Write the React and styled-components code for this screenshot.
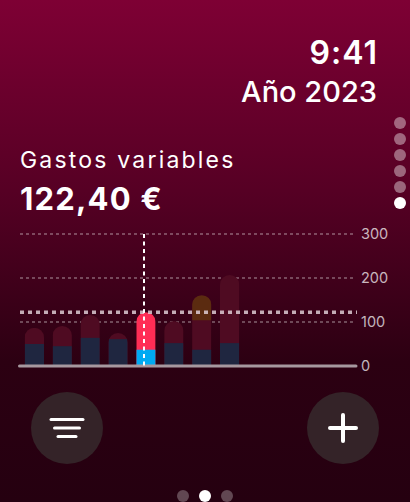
import { createGlobalStyle, styled } from "styled-components";

const GlobalStyle = createGlobalStyle`
  html, body {
    margin: 0;
    padding: 0;
    background: #250010;
  }
  body {
    font-family: Inter, "Noto Sans", "Liberation Sans", sans-serif;
    color: #fff;
  }
`;

const Screen = styled.div`
  position: relative;
  width: 410px;
  height: 502px;
  overflow: hidden;
  display: flex;
  flex-direction: column;
  background: linear-gradient(180deg, #7e0034 0%, #560024 38%, #2c0012 72%, #250010 100%);
`;

const Header = styled.div`
  display: flex;
  flex-direction: column;
  align-items: flex-end;
  padding: 34px 33px 0 0;
`;

const Time = styled.div`
  font-size: 32px;
  line-height: 38px;
  font-weight: 600;
  letter-spacing: 1px;
  margin-right: -1px;
`;

const Year = styled.div`
  margin-top: 3px;
  font-size: 29px;
  line-height: 34px;
  font-weight: 500;
`;

const Summary = styled.div`
  padding: 37px 0 0 20px;
`;

const Label = styled.div`
  font-size: 23px;
  line-height: 28px;
  font-weight: 400;
  letter-spacing: 2.2px;
`;

const Amount = styled.div`
  margin-top: 6px;
  font-size: 31px;
  line-height: 38px;
  font-weight: 700;
  letter-spacing: 1.2px;
`;

const ChartSvg = styled.svg`
  display: block;
  margin-top: 8px;
`;

const ActionRow = styled.div`
  display: flex;
  justify-content: space-between;
  padding: 16px 31px 0;
`;

const RoundButton = styled.button`
  width: 72px;
  height: 72px;
  border-radius: 50%;
  border: none;
  padding: 0;
  background: #342328;
  display: flex;
  align-items: center;
  justify-content: center;
`;

const PageDots = styled.div`
  display: flex;
  justify-content: center;
  gap: 10px;
  margin-top: 26px;
`;

const SideDots = styled.div`
  position: absolute;
  right: 4px;
  top: 117px;
  display: flex;
  flex-direction: column;
  gap: 4px;
`;

const Dot = styled.span`
  width: 12px;
  height: 12px;
  border-radius: 50%;
  background: ${(p) => (p.$active ? "#ffffff" : p.$soft ? "rgba(255,255,255,0.4)" : "rgba(255,255,255,0.28)")};
`;

// values per month: top value, lower (navy) part, optional highlight part
const months = [
  { total: 87, low: 50 },
  { total: 91, low: 45 },
  { total: 116, low: 64 },
  { total: 75, low: 61 },
  { total: 122.4, low: 37, selected: true },
  { total: 102, low: 52 },
  { total: 161, low: 37, extra: 57 },
  { total: 207, low: 52 },
];

const BASE = 140;
const SCALE = 0.44;
const BAR_W = 19.3;

function Chart() {
  const grid = [300, 200, 100];
  const avgY = BASE - 122.4 * SCALE;
  return (
    <ChartSvg width="410" height="150" viewBox="0 0 410 150">
      <defs>
        {months.map((m, i) => {
          const x = 24.7 + i * 27.9;
          const top = BASE - m.total * SCALE;
          return (
            <clipPath id={`bar-${i}`} key={i}>
              <rect x={x} y={top} width={BAR_W} height={BASE - top + 12} rx={BAR_W / 2} />
            </clipPath>
          );
        })}
      </defs>

      {grid.map((v) => (
        <line
          key={v}
          x1="20"
          x2="353"
          y1={BASE - v * SCALE}
          y2={BASE - v * SCALE}
          stroke="rgba(255,255,255,0.38)"
          strokeWidth="1.3"
          strokeDasharray="3 3"
        />
      ))}

      {months.map((m, i) => {
        const x = 24.7 + i * 27.9;
        const top = BASE - m.total * SCALE;
        const lowY = BASE - m.low * SCALE;
        return (
          <g key={i} clipPath={`url(#bar-${i})`}>
            <rect x={x} y={top} width={BAR_W} height={BASE - top} fill={m.selected ? "#ff2d55" : "#4f0b22"} />
            {m.extra && <rect x={x} y={top} width={BAR_W} height={m.extra * SCALE} fill="#5b2b10" />}
            <rect x={x} y={lowY} width={BAR_W} height={BASE - lowY} fill={m.selected ? "#00aaf2" : "#1f2640"} />
          </g>
        );
      })}

      <line x1="20" x2="357" y1={avgY} y2={avgY} stroke="rgba(230,215,222,0.8)" strokeWidth="3.5" strokeDasharray="4 4" />
      <line x1="19.5" x2="356" y1={BASE} y2={BASE} stroke="#a6989f" strokeWidth="3" strokeLinecap="round" />
      <line x1="144" x2="144" y1="8" y2={BASE} stroke="#ffffff" strokeWidth="2" strokeDasharray="4 3.5" />

      {[300, 200, 100, 0].map((v) => (
        <text
          key={v}
          x="361"
          y={BASE - v * SCALE + 5}
          fill="rgba(255,255,255,0.72)"
          fontSize="14.5"
          fontFamily="Inter, 'Noto Sans', sans-serif"
        >
          {v}
        </text>
      ))}
    </ChartSvg>
  );
}

function FilterIcon() {
  return (
    <svg width="36" height="24" viewBox="0 0 36 24">
      <g stroke="#fff" strokeWidth="3" strokeLinecap="round">
        <line x1="2" x2="34" y1="3.5" y2="3.5" />
        <line x1="5.5" x2="30.5" y1="12" y2="12" />
        <line x1="9" x2="27" y1="20.5" y2="20.5" />
      </g>
    </svg>
  );
}

function PlusIcon() {
  return (
    <svg width="30" height="30" viewBox="0 0 30 30">
      <g stroke="#fff" strokeWidth="4" strokeLinecap="round">
        <line x1="2" x2="28" y1="15" y2="15" />
        <line x1="15" x2="15" y1="2" y2="28" />
      </g>
    </svg>
  );
}

export default function App() {
  return (
    <>
      <GlobalStyle />
      <Screen>
        <Header>
          <Time>9:41</Time>
          <Year>Año 2023</Year>
        </Header>
        <SideDots>
          {[0, 1, 2, 3, 4].map((i) => (
            <Dot key={i} $soft />
          ))}
          <Dot $active />
        </SideDots>
        <Summary>
          <Label>Gastos variables</Label>
          <Amount>122,40 €</Amount>
        </Summary>
        <Chart />
        <ActionRow>
          <RoundButton aria-label="Filtrar">
            <FilterIcon />
          </RoundButton>
          <RoundButton aria-label="Añadir">
            <PlusIcon />
          </RoundButton>
        </ActionRow>
        <PageDots>
          <Dot />
          <Dot $active />
          <Dot />
        </PageDots>
      </Screen>
    </>
  );
}
